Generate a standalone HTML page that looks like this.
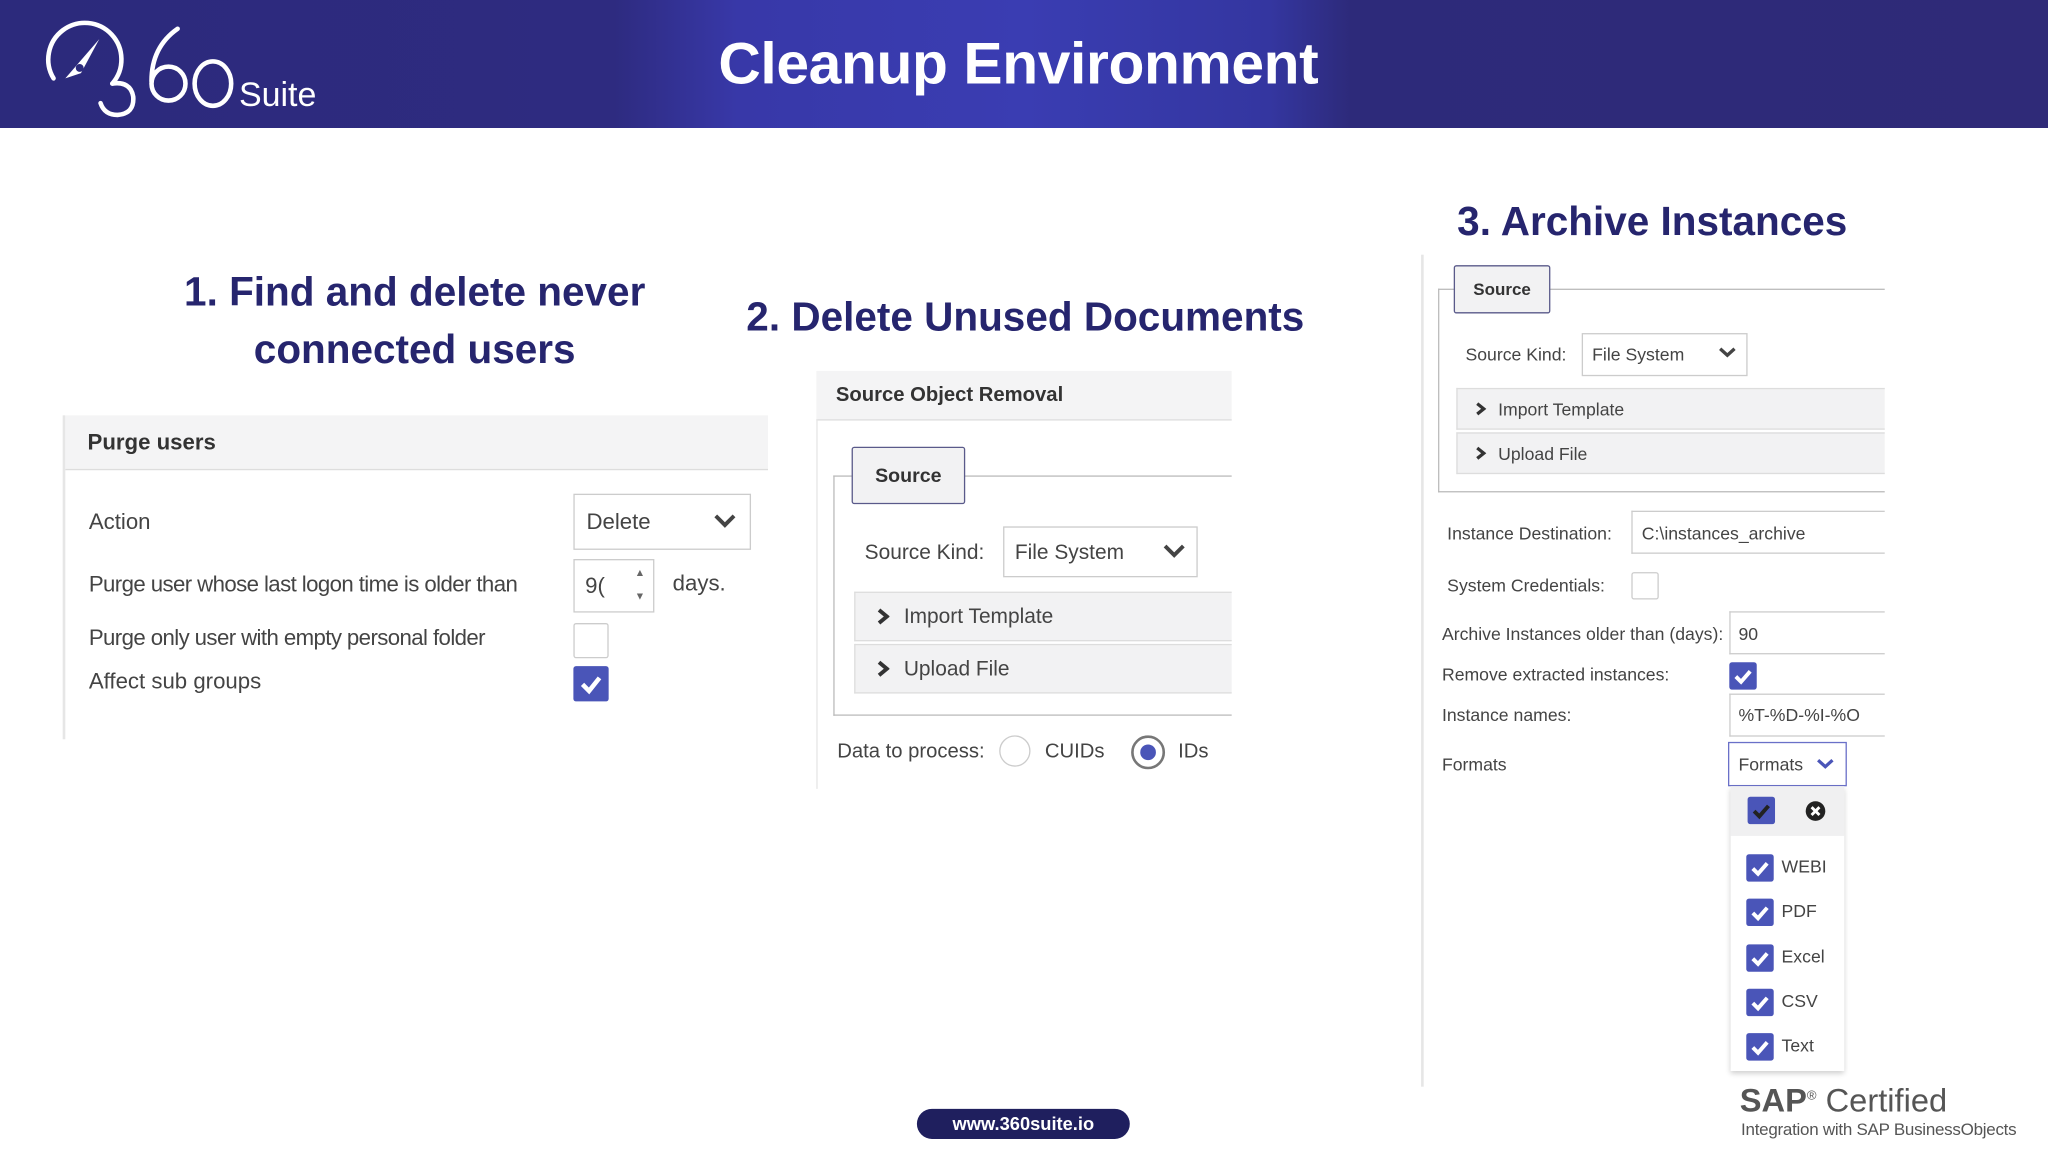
<!DOCTYPE html>
<html><head><meta charset="utf-8"><style>
html,body{margin:0;padding:0;background:#fff;overflow:hidden}
body{width:2048px;height:1152px}
#w{position:absolute;left:0;top:0;width:1568px;height:882px;transform:scale(1.306122);transform-origin:0 0;font-family:"Liberation Sans",sans-serif;color:#333}
.a{position:absolute}
.hd{left:0;top:0;width:1568px;height:98px;background:linear-gradient(90deg,#2c2a7c 0%,#2e2b80 30%,#3838a8 36%,#3a3db2 50%,#3436a0 62%,#2d2a7a 66%,#2f2a78 100%)}
.t{color:#26256e;font-weight:bold;font-size:31px;text-align:center}
.lb{font-size:17px;color:#444;white-space:nowrap}
.lbs{font-size:13.5px;color:#444;white-space:nowrap}
.box{border:1px solid #ccc;background:#fff;box-sizing:border-box}
.cb{background:#4a55b8;border-radius:2px}
.gray{background:#f2f2f3;border:1px solid #ddd;box-sizing:border-box}
</style></head><body><div id="w">
<div class="a hd"></div>
<!-- logo -->
<svg class="a" style="left:30px;top:12px" width="220" height="80" viewBox="0 0 220 80">
<g fill="none" stroke="#fff" stroke-width="3.5" stroke-linecap="round">
<path d="M11 48 A28 28 0 1 1 56 52"/>
<path d="M56 52 q14 -2 16 10 q1 13 -12 14 q-10 0 -13 -9"/>
<path d="M106 10 q-20 14 -20 40"/>
<circle cx="99" cy="52" r="13"/>
<ellipse cx="133" cy="52" rx="14" ry="17"/>
</g>
<path d="M20 48 L46 18 L32 44 Z" fill="#fff"/>
<circle cx="31" cy="40" r="3" fill="#2c2a7c"/>
<text x="153" y="69" fill="#fff" font-family="Liberation Sans" font-size="26">Suite</text>
</svg>
<div class="a" style="left:550px;top:23px;color:#fff;font-weight:bold;font-size:45px;letter-spacing:-0.3px">Cleanup Environment</div>

<div class="a t" style="left:100px;top:202px;width:435px;line-height:44px">1. Find and delete never connected users</div>
<div class="a t" style="left:560px;top:225px;width:450px">2. Delete Unused Documents</div>
<div class="a t" style="left:1100px;top:152px;width:330px">3. Archive Instances</div>

<!-- panel 1 -->
<div class="a" style="left:48px;top:318px;width:2px;height:248px;background:#e6e6e6"></div>
<div class="a" style="left:50px;top:318px;width:538px;height:41px;background:#f4f4f5;border-bottom:1px solid #ddd"></div>
<div class="a" style="left:67px;top:329px;font-weight:bold;font-size:17px;color:#333">Purge users</div>
<div class="a lb" style="left:68px;top:390px">Action</div>
<div class="a box" style="left:439px;top:378px;width:136px;height:43px"></div>
<div class="a lb" style="left:449px;top:390px">Delete</div>
<svg class="a" style="left:546px;top:393px" width="18" height="12"><path d="M2 2 L9 9 L16 2" stroke="#444" stroke-width="3" fill="none"/></svg>
<div class="a lb" style="left:68px;top:438px;letter-spacing:-0.45px">Purge user whose last logon time is older than</div>
<div class="a box" style="left:439px;top:428px;width:62px;height:41px"></div>
<div class="a lb" style="left:448px;top:439px">9(</div>
<div class="a" style="left:486px;top:434px;font-size:8px;color:#666">▲</div>
<div class="a" style="left:486px;top:452px;font-size:8px;color:#666">▼</div>
<div class="a lb" style="left:515px;top:437px">days.</div>
<div class="a lb" style="left:68px;top:479px;letter-spacing:-0.45px">Purge only user with empty personal folder</div>
<div class="a box" style="left:439px;top:477px;width:27px;height:27px;border-radius:2px"></div>
<div class="a lb" style="left:68px;top:512px">Affect sub groups</div>
<div class="a cb" style="left:439px;top:510px;width:27px;height:27px"></div>
<svg class="a" style="left:439px;top:510px" width="27" height="27"><path d="M7 14 L12 19 L20 9" stroke="#fff" stroke-width="3.5" fill="none"/></svg>

<!-- panel 2 -->
<div class="a" style="left:625px;top:284px;width:318px;height:37px;background:#f4f4f5;border-bottom:1px solid #ddd"></div>
<div class="a" style="left:625px;top:321px;width:1px;height:283px;background:#e6e6e6"></div>
<div class="a" style="left:640px;top:294px;font-weight:bold;font-size:15.5px;color:#333">Source Object Removal</div>
<div class="a" style="left:638px;top:364px;width:305px;height:184px;border:1px solid #bbb;border-right:none;box-sizing:border-box"></div>
<div class="a" style="left:652px;top:342px;width:87px;height:44px;background:#f2f2f3;border:1.5px solid #5a5a8a;border-radius:2px;box-sizing:border-box"></div>
<div class="a" style="left:670px;top:356px;font-weight:bold;font-size:15px;color:#333">Source</div>
<div class="a lb" style="left:662px;top:415px;font-size:16px">Source Kind:</div>
<div class="a box" style="left:768px;top:403px;width:149px;height:39px"></div>
<div class="a lb" style="left:777px;top:415px;font-size:16px">File System</div>
<svg class="a" style="left:890px;top:416px" width="18" height="12"><path d="M2 2 L9 9 L16 2" stroke="#444" stroke-width="3" fill="none"/></svg>
<div class="a gray" style="left:654px;top:453px;width:289px;height:38px;border-right:none"></div>
<div class="a gray" style="left:654px;top:493px;width:289px;height:38px;border-right:none"></div>
<svg class="a" style="left:671px;top:465px" width="10" height="14"><path d="M2 2 L8 7 L2 12" stroke="#333" stroke-width="3" fill="none"/></svg>
<svg class="a" style="left:671px;top:505px" width="10" height="14"><path d="M2 2 L8 7 L2 12" stroke="#333" stroke-width="3" fill="none"/></svg>
<div class="a lb" style="left:692px;top:464px;font-size:16px">Import Template</div>
<div class="a lb" style="left:692px;top:504px;font-size:16px">Upload File</div>
<div class="a lb" style="left:641px;top:567px;font-size:15.5px">Data to process:</div>
<div class="a" style="left:765px;top:563px;width:24px;height:24px;border:1px solid #ccc;border-radius:50%;box-sizing:border-box"></div>
<div class="a lb" style="left:800px;top:567px;font-size:15.5px">CUIDs</div>
<div class="a" style="left:866px;top:563px;width:26px;height:26px;border:2px solid #777;border-radius:50%;box-sizing:border-box"></div>
<div class="a" style="left:873px;top:570px;width:12px;height:12px;background:#4a55b8;border-radius:50%"></div>
<div class="a lb" style="left:902px;top:567px;font-size:15.5px">IDs</div>

<!-- panel 3 -->
<div class="a" style="left:1088px;top:195px;width:2px;height:637px;background:#e6e6e6"></div>
<div class="a" style="left:1101px;top:221px;width:342px;height:156px;border:1px solid #bbb;border-right:none;box-sizing:border-box"></div>
<div class="a" style="left:1113px;top:203px;width:74px;height:37px;background:#f2f2f3;border:1.5px solid #5a5a8a;border-radius:2px;box-sizing:border-box"></div>
<div class="a" style="left:1128px;top:214px;font-weight:bold;font-size:13px;color:#333">Source</div>
<div class="a lbs" style="left:1122px;top:264px">Source Kind:</div>
<div class="a box" style="left:1211px;top:255px;width:127px;height:33px"></div>
<div class="a lbs" style="left:1219px;top:264px">File System</div>
<svg class="a" style="left:1315px;top:265px" width="15" height="10"><path d="M2 2 L7.5 7 L13 2" stroke="#444" stroke-width="2.5" fill="none"/></svg>
<div class="a gray" style="left:1115px;top:297px;width:328px;height:32px;border-right:none"></div>
<div class="a gray" style="left:1115px;top:331px;width:328px;height:32px;border-right:none"></div>
<svg class="a" style="left:1129px;top:307px" width="9" height="12"><path d="M2 2 L7 6 L2 10" stroke="#333" stroke-width="2.5" fill="none"/></svg>
<svg class="a" style="left:1129px;top:341px" width="9" height="12"><path d="M2 2 L7 6 L2 10" stroke="#333" stroke-width="2.5" fill="none"/></svg>
<div class="a lbs" style="left:1147px;top:306px">Import Template</div>
<div class="a lbs" style="left:1147px;top:340px">Upload File</div>
<div class="a lbs" style="left:1108px;top:401px">Instance Destination:</div>
<div class="a box" style="left:1249px;top:391px;width:194px;height:33px;border-right:none"></div>
<div class="a lbs" style="left:1257px;top:401px">C:\instances_archive</div>
<div class="a lbs" style="left:1108px;top:441px">System Credentials:</div>
<div class="a box" style="left:1249px;top:438px;width:21px;height:21px;border-radius:2px"></div>
<div class="a lbs" style="left:1104px;top:478px">Archive Instances older than (days):</div>
<div class="a box" style="left:1324px;top:468px;width:119px;height:33px;border-right:none"></div>
<div class="a lbs" style="left:1331px;top:478px">90</div>
<div class="a lbs" style="left:1104px;top:509px">Remove extracted instances:</div>
<div class="a cb" style="left:1324px;top:507px;width:21px;height:21px"></div>
<svg class="a" style="left:1324px;top:507px" width="21" height="21"><path d="M5 11 L9 15 L16 7" stroke="#fff" stroke-width="3" fill="none"/></svg>
<div class="a lbs" style="left:1104px;top:540px">Instance names:</div>
<div class="a box" style="left:1324px;top:531px;width:119px;height:33px;border-right:none"></div>
<div class="a lbs" style="left:1331px;top:540px">%T-%D-%I-%O</div>
<div class="a lbs" style="left:1104px;top:578px">Formats</div>
<div class="a" style="left:1323px;top:568px;width:91px;height:34px;border:1.5px solid #6a70c8;background:#fff;box-sizing:border-box"></div>
<div class="a lbs" style="left:1331px;top:578px">Formats</div>
<svg class="a" style="left:1390px;top:580px" width="15" height="10"><path d="M2 2 L7.5 7 L13 2" stroke="#4a55b8" stroke-width="2.5" fill="none"/></svg>
<div class="a" style="left:1325px;top:602px;width:87px;height:218px;background:#fff;box-shadow:0 2px 4px rgba(0,0,0,0.2)"></div>
<div class="a" style="left:1325px;top:602px;width:87px;height:38px;background:#f0f0f1"></div>
<div class="a" style="left:1338px;top:610px;width:21px;height:21px;background:#4a55b8;border-radius:2px"></div>
<svg class="a" style="left:1338px;top:610px" width="21" height="21"><path d="M5 11 L9 15 L16 7" stroke="#222" stroke-width="3" fill="none"/></svg>
<svg class="a" style="left:1382px;top:613px" width="16" height="16"><circle cx="8" cy="8" r="7.5" fill="#222"/><path d="M5 5 L11 11 M11 5 L5 11" stroke="#fff" stroke-width="2.2"/></svg>
<div class="a" style="left:1337px;top:654px">
<div style="position:relative;height:34.3px"><div class="cb" style="position:absolute;width:21px;height:21px"></div><svg style="position:absolute" width="21" height="21"><path d="M5 11 L9 15 L16 7" stroke="#fff" stroke-width="3" fill="none"/></svg><span class="lbs" style="position:absolute;left:27px;top:2px">WEBI</span></div>
<div style="position:relative;height:34.3px"><div class="cb" style="position:absolute;width:21px;height:21px"></div><svg style="position:absolute" width="21" height="21"><path d="M5 11 L9 15 L16 7" stroke="#fff" stroke-width="3" fill="none"/></svg><span class="lbs" style="position:absolute;left:27px;top:2px">PDF</span></div>
<div style="position:relative;height:34.3px"><div class="cb" style="position:absolute;width:21px;height:21px"></div><svg style="position:absolute" width="21" height="21"><path d="M5 11 L9 15 L16 7" stroke="#fff" stroke-width="3" fill="none"/></svg><span class="lbs" style="position:absolute;left:27px;top:2px">Excel</span></div>
<div style="position:relative;height:34.3px"><div class="cb" style="position:absolute;width:21px;height:21px"></div><svg style="position:absolute" width="21" height="21"><path d="M5 11 L9 15 L16 7" stroke="#fff" stroke-width="3" fill="none"/></svg><span class="lbs" style="position:absolute;left:27px;top:2px">CSV</span></div>
<div style="position:relative;height:34.3px"><div class="cb" style="position:absolute;width:21px;height:21px"></div><svg style="position:absolute" width="21" height="21"><path d="M5 11 L9 15 L16 7" stroke="#fff" stroke-width="3" fill="none"/></svg><span class="lbs" style="position:absolute;left:27px;top:2px">Text</span></div>
</div>

<!-- footer -->
<div class="a" style="left:702px;top:849px;width:163px;height:23px;background:#1f1f5e;border-radius:12px;color:#fff;font-weight:bold;font-size:14px;text-align:center;line-height:23px">www.360suite.io</div>
<div class="a" style="left:1332px;top:829px;font-size:25px;color:#555;white-space:nowrap"><b>SAP</b><sup style="font-size:10px">®</sup> Certified</div>
<div class="a" style="left:1333px;top:857px;font-size:13px;color:#555;white-space:nowrap;letter-spacing:-0.2px">Integration with SAP BusinessObjects</div>
</div></body></html>
